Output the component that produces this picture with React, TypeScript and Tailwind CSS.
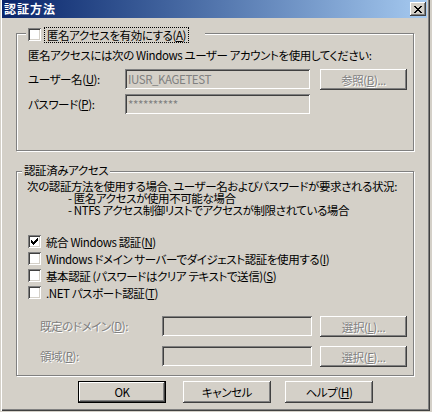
import React from 'react';

// Win2000 classic 3D edges
const raised =
  'shadow-[inset_-1px_-1px_#404040,inset_1px_1px_#ffffff,inset_-2px_-2px_#808080,inset_2px_2px_#d4d0c8]';
const sunken =
  'shadow-[inset_1px_1px_#808080,inset_-1px_-1px_#ffffff,inset_2px_2px_#404040,inset_-2px_-2px_#d4d0c8]';
const etched = 'border border-[#808080] shadow-[inset_1px_1px_#ffffff,1px_1px_#ffffff]';
const disabledText = 'text-[#808080] [text-shadow:1px_1px_0_#ffffff]';

function Checkbox({ checked = false }: { checked?: boolean }) {
  return (
    <span className={`flex h-[13px] w-[13px] shrink-0 items-center justify-center bg-white ${sunken}`}>
      {checked && (
        <svg width="7" height="7" viewBox="0 0 7 7" shapeRendering="crispEdges">
          <path
            d="M6 0h1v1H6zM5 1h2v1H5zM0 2h1v1H0zM4 2h3v1H4zM0 3h2v1H0zM3 3h3v1H3zM0 4h5v1H0zM1 5h3v1H1zM2 6h1v1H2z"
            fill="#000"
          />
        </svg>
      )}
    </span>
  );
}

function Button({
  children,
  disabled = false,
  isDefault = false,
  className = '',
}: {
  children: React.ReactNode;
  disabled?: boolean;
  isDefault?: boolean;
  className?: string;
}) {
  return (
    <div className={`shrink-0 ${isDefault ? 'border border-black' : ''} ${className}`}>
      <div
        className={`flex h-full w-full items-center justify-center bg-[#d4d0c8] leading-[12px] ${raised} ${
          disabled ? disabledText : 'text-black'
        }`}
      >
        {children}
      </div>
    </div>
  );
}

function Field({ value, className = '' }: { value?: string; className?: string }) {
  return (
    <div className={`flex h-[20px] shrink-0 items-center bg-[#d4d0c8] pl-[3px] leading-[12px] text-[#808080] ${sunken} ${className}`}>
      {value}
    </div>
  );
}

export default function App() {
  return (
    <div className="h-[412px] w-[432px] overflow-hidden whitespace-nowrap bg-[#d4d0c8] font-['Noto_Sans_CJK_JP',sans-serif] text-[11.5px] tracking-[-0.4px] text-black [font-feature-settings:'palt']">
      <div className="flex h-[411px] w-[430px] flex-col shadow-[inset_1px_0_#d4d0c8,inset_2px_0_#ffffff,inset_-1px_-1px_#404040,inset_-2px_-2px_#808080]">
        {/* title bar */}
        <div className="ml-[2px] flex h-[18px] w-[425px] items-center justify-between bg-linear-to-r from-[#0a246a] to-[#a6caf0] pl-[2px] pr-[1px]">
          <span className="text-[12px] font-bold leading-[12px] tracking-[1px] text-white">認証方法</span>
          <div className={`flex h-[14px] w-[16px] items-center justify-center bg-[#d4d0c8] ${raised}`}>
            <svg width="8" height="7" viewBox="0 0 8 7" shapeRendering="crispEdges">
              <path
                d="M0 0h2v1H0zM6 0h2v1H6zM1 1h2v1H1zM5 1h2v1H5zM2 2h4v1H2zM3 3h2v1H3zM2 4h4v1H2zM1 5h2v1H1zM5 5h2v1H5zM0 6h2v1H0zM6 6h2v1H6z"
                fill="#000"
              />
            </svg>
          </div>
        </div>

        <div className="flex flex-col pl-[16px] pt-[15px]">
          {/* anonymous access group */}
          <div className={`relative h-[118px] w-[398px] ${etched}`}>
            <div className="absolute left-[9px] top-[-8px] flex h-[17px] w-[179px] items-center bg-[#d4d0c8] pl-[2px]">
              <Checkbox />
              <span className="ml-[3px] border border-dotted border-black px-[2px] py-[1px] leading-[12px]">
                匿名アクセスを有効にする(<u>A</u>)
              </span>
            </div>
            <div className="flex flex-col pl-[11px] pt-[15px]">
              <div className="leading-[12px]">匿名アクセスには次の Windows ユーザー アカウントを使用してください:</div>
              <div className="mt-[8px] flex h-[21px] items-start">
                <div className="flex h-[20px] w-[97px] items-center leading-[12px]">
                  ユーザー名(<u>U</u>):
                </div>
                <Field value="IUSR_KAGETEST" className="w-[185px]" />
                <Button disabled className="ml-[10px] h-[21px] w-[87px]">
                  参照(<u>B</u>)...
                </Button>
              </div>
              <div className="mt-[4px] flex h-[20px] items-start">
                <div className="flex h-[20px] w-[97px] items-center leading-[12px]">
                  パスワード(<u>P</u>):
                </div>
                <Field value="**********" className="w-[185px]" />
              </div>
            </div>
          </div>

          {/* authenticated access group */}
          <div className={`relative mt-[20px] h-[205px] w-[398px] ${etched}`}>
            <div className="absolute left-[5px] top-[-8px] bg-[#d4d0c8] px-[2px] leading-[12px]">認証済みアクセス</div>
            <div className="flex flex-col pl-[10px] pt-[8px] leading-[12px]">
              <div>次の認証方法を使用する場合、ユーザー名およびパスワードが要求される状況:</div>
              <div className="pl-[41px]">- 匿名アクセスが使用不可能な場合</div>
              <div className="pl-[41px]">- NTFS アクセス制御リストでアクセスが制限されている場合</div>
            </div>
            <div className="mt-[17px] flex flex-col pl-[11px]">
              {[
                { checked: true, label: <>統合 Windows 認証(<u>N</u>)</> },
                { checked: false, label: <>Windows ドメイン サーバーでダイジェスト認証を使用する(<u>I</u>)</> },
                { checked: false, label: <>基本認証 (パスワードはクリア テキストで送信)(<u>S</u>)</> },
                { checked: false, label: <>.NET パスポート認証(<u>T</u>)</> },
              ].map((row, i) => (
                <div key={i} className="flex h-[17px] items-center">
                  <Checkbox checked={row.checked} />
                  <span className="ml-[5px] leading-[12px]">{row.label}</span>
                </div>
              ))}
            </div>
            <div className="mt-[15px] flex h-[21px] items-start pl-[23px]">
              <div className={`flex h-[20px] w-[122px] items-center leading-[12px] ${disabledText}`}>
                既定のドメイン(<u>D</u>):
              </div>
              <Field className="w-[150px]" />
              <Button disabled className="ml-[8px] h-[21px] w-[87px]">
                選択(<u>L</u>)...
              </Button>
            </div>
            <div className="mt-[9px] flex h-[21px] items-start pl-[23px]">
              <div className={`flex h-[20px] w-[122px] items-center leading-[12px] ${disabledText}`}>
                領域(<u>R</u>):
              </div>
              <Field className="w-[150px]" />
              <Button disabled className="ml-[8px] h-[21px] w-[87px]">
                選択(<u>E</u>)...
              </Button>
            </div>
          </div>

          {/* dialog buttons */}
          <div className="mt-[5px] flex pl-[62px]">
            <Button isDefault className="h-[22px] w-[88px]">
              OK
            </Button>
            <Button className="ml-[17px] h-[22px] w-[88px]">キャンセル</Button>
            <Button className="ml-[14px] h-[22px] w-[88px]">
              ヘルプ(<u>H</u>)
            </Button>
          </div>
        </div>
      </div>
    </div>
  );
}
